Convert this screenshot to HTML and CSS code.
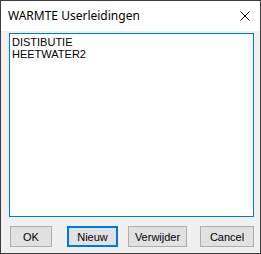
FILE: index.html
```html
<!DOCTYPE html>
<html lang="nl">
<head>
    <meta charset="UTF-8">
    <title>WARMTE Userleidingen</title>
    <link rel="stylesheet" href="styles.css">
</head>
<body>

    <div class="window">
        <div class="titlebar">
            <span class="title">WARMTE Userleidingen</span>
            <svg class="close" width="10" height="10" viewBox="0 0 10 10">
                <path d="M0.5 0.5 L9.5 9.5 M9.5 0.5 L0.5 9.5" stroke="#000" stroke-width="1" fill="none"/>
            </svg>
        </div>

        <div class="content">
            <div class="listbox">
                <div class="item">DISTIBUTIE</div>
                <div class="item">HEETWATER2</div>
            </div>

            <div class="buttons">
                <button class="btn ok">OK</button>
                <button class="btn nieuw">Nieuw</button>
                <button class="btn verwijder">Verwijder</button>
                <button class="btn cancel">Cancel</button>
            </div>
        </div>
    </div>

</body>
</html>
```

FILE: styles.css
```css
body {
    margin: 0;
    font-family: "Liberation Sans", Arial, sans-serif;
    background-color: #f0f0f0;
}

.window {
    width: 261px;
    height: 254px;
    box-sizing: border-box;
    border: 1px solid #3c3c3c;
    background-color: #f0f0f0;
    display: flex;
    flex-direction: column;
}

.titlebar {
    height: 30px;
    background-color: white;
    display: flex;
    align-items: center;
    justify-content: space-between;
    padding: 0 10px 0 7px;
}

.title {
    font-family: "Noto Sans", "Open Sans", sans-serif;
    font-size: 12px;
    color: black;
    margin-top: -1px;
}

.close {
    display: block;
}

.content {
    flex: 1;
    display: flex;
    flex-direction: column;
    padding: 2px 6px 6px 8px;
}

.listbox {
    flex: 1;
    background-color: white;
    border: 1px solid #0078d7;
    padding: 2px 2px;
}

.item {
    font-size: 11px;
    line-height: 12px;
    color: black;
}

.buttons {
    display: flex;
    margin-top: 9px;
    margin-left: 1px;
    height: 21px;
}

.btn {
    height: 21px;
    box-sizing: border-box;
    background-color: #e1e1e1;
    border: 1px solid #adadad;
    font-family: "Liberation Sans", Arial, sans-serif;
    font-size: 11px;
    color: black;
    padding: 0;
    margin: 0;
}

.ok {
    width: 42px;
}

.nieuw {
    width: 51px;
    margin-left: 15px;
    border: 2px solid #0078d7;
}

.verwijder {
    width: 59px;
    margin-left: 10px;
}

.cancel {
    width: 54px;
    margin-left: 13px;
}
```
